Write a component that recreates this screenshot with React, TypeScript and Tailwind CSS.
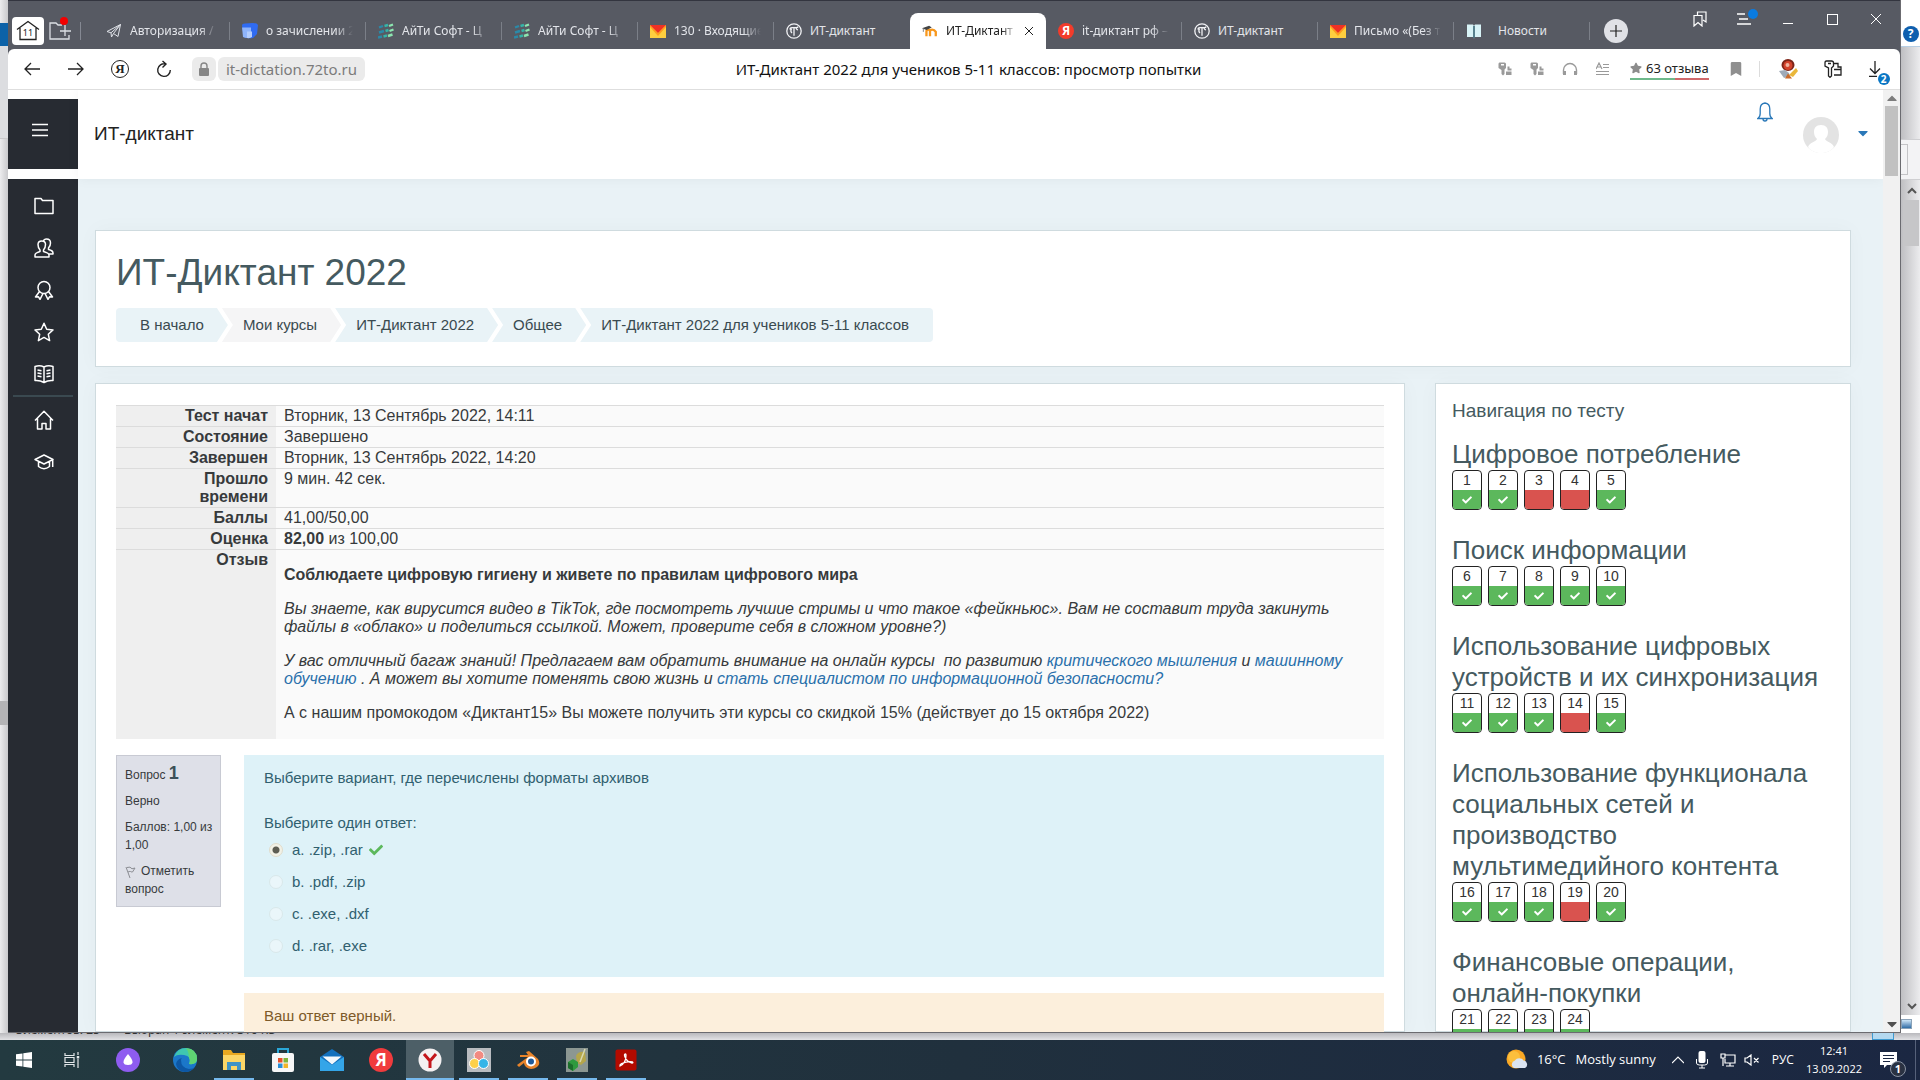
import type { ReactNode } from "react";
import clsx from "clsx";
import {
  FaBookmark,
  FaCaretDown,
  FaCaretUp,
  FaCheck,
  FaStar,
} from "react-icons/fa";

type IconProps = { className?: string };

/* ---------- Browser icons ---------- */

const PlaneIcon = () => (
  <svg viewBox="0 0 16 16" className="size-4" fill="none" stroke="#dfe2e8">
    <path d="M1 8.5 14.5 1.5 12 13.5 7.5 10.5 5.5 14 5 9.8Z M5 9.8 14.5 1.5 7.5 10.5" />
  </svg>
);

const BlobIcon = () => (
  <svg viewBox="0 0 16 16" className="size-4">
    <path d="M0 2.500Q0 .5 3 .5L11 0q4 0 5 2l-1 9-4 4q-5 1-9-1Z" fill="#2f6bf2" />
    <path d="M0 4.500h9v9.500q-4 2-8 0Z" fill="#8fb4fb" />
    <path d="M5 8.500h5v5.500q-2 1.500-5 1Z" fill="#b4cdfd" />
  </svg>
);

const SoftIcon = () => (
  <svg viewBox="0 0 16 16" className="size-4" strokeWidth="2.400">
    <path d="M1 4.500 5 3M1 9.500 6 8M0 14.500 4 13.500" stroke="#2b8aa8" />
    <path d="M6.500 3 10 2M7.500 8 10.500 7M5.500 13.500 9 12.500" stroke="#35b4a8" />
    <path d="M11 3 15 1.500M11.500 8 15.500 6.500M10 13 14.500 11.500" stroke="#8ce6b0" />
  </svg>
);

const MailIcon = () => (
  <svg viewBox="0 0 16 14" className="h-3.5 w-4">
    <path d="M0 1h16v13H0z" fill="#ffcf3f" />
    <path d="M0 1 8 9 16 1v2l-8 9-8-9z" fill="#ff9d1e" />
    <path d="M0 1h16L8 9z" fill="#ee3124" />
  </svg>
);

const CircleTIcon = () => (
  <svg viewBox="0 0 16 16" className="size-4" fill="none" stroke="#f1f2f5" strokeWidth="1.300">
    <circle cx="8" cy="8" r="7.200" />
    <path d="M3.800 6.500q.5-2 2.200-1.800h4.500q1.300 0 1.700-1.200M8 4.700v8M5.500 5.500q-1.500 3 .5 4.500M10 4.900q.8 2 2 2" />
  </svg>
);

const MoodleIcon = () => (
  <svg viewBox="0 0 18 14" className="h-3.5 w-4" fill="none">
    <path d="M5 13V7.500q0-2 2-2t2 2V13M9 13V7.500q0-2 2.500-2T15.500 8v5" stroke="#f8981d" strokeWidth="2.600" />
    <path d="M0 4 8 1l3 2-6 3z" fill="#444" />
    <path d="M1.500 4v4" stroke="#777" />
  </svg>
);

const YaIcon = () => (
  <span className="flex size-4 items-center justify-center rounded-full bg-[#f33b2a] text-xs font-bold text-white">
    Я
  </span>
);

const BookIcon = () => (
  <svg viewBox="0 0 16 16" className="size-4">
    <path d="M1 1.500h6L8 3l1-1.500h6V14H9l-1 1.500L7 14H1z" fill="#d8f3f7" />
    <path d="M8 3v12" stroke="#2c5b6b" strokeWidth="1.500" />
  </svg>
);

const KeyCardIcon = ({ className }: IconProps) => (
  <svg viewBox="0 0 14 14" className={className} fill="#9a9a9a">
    <path
      fillRule="evenodd"
      d="M1.500.5h5q1.500 0 1.500 1.500v4L6.500 7.500V12L5 13.500 3.500 12V8L.5 6V2q0-1.500 1-1.500zM3 2v1.500h3V2z"
    />
    <path d="M9.500 4.500h2v2h2v2h-4zM8 9.500h5.500V13H8z" />
  </svg>
);

/* ---------- Sidebar icons ---------- */

const Line = ({ children }: { children: ReactNode }) => (
  <svg
    viewBox="0 0 20 20"
    className="size-5"
    fill="none"
    stroke="currentColor"
    strokeWidth="1.500"
    strokeLinejoin="round"
  >
    {children}
  </svg>
);

const sideTop = [
  {
    label: "Файлы",
    icon: <path d="M1 2.500h6l1.500 2H19V17.500H1z" />,
  },
  {
    label: "Участники",
    icon: (
      <path d="M1 19v-2q0-2 5-3.500V12Q4 10 4 6.500 4 3 7.800 3q3.700 0 3.700 3.500 0 3.500-2 5.500v1.500Q15 15 15 17v2zM9.500 3q.5-2 3-2 4 0 4 4 0 3-2 5v1.500q4.500 1 4.500 3.500v1h-4" />
    ),
  },
  {
    label: "Значки",
    icon: (
      <>
        <circle cx="10" cy="7.500" r="6" />
        <path d="M5.500 11.500 1.500 17l3-.2L6 19.300l3-5.800M14.500 11.500l4 5.500-3-.2-1.500 2.500-3-5.800" />
      </>
    ),
  },
  {
    label: "Компетенции",
    icon: <path d="m10 1.200 2.700 6 6.300.7-4.700 4.300 1.300 6.400L10 15.400l-5.600 3.200 1.300-6.400L1 7.900l6.300-.7z" />,
  },
  {
    label: "Оценки",
    icon: (
      <path d="M1 2.500q5-1.500 9 .5 4-2 9-.5v14q-5-.5-9 2-4-2.500-9-2zM10 3v15.500M3.500 6l4 .8M3.500 9l4 .8M3.500 12l4 .8M12.500 6.800l4-.8M12.500 9.800l4-.8M12.500 12.800l4-.8" />
    ),
  },
];

const sideBottom = [
  {
    label: "Домой",
    icon: <path d="M1 10.500 10 1.200l9 9.300M3.500 8.500V19H8v-5.500h4V19h4.500V8.500" />,
  },
  {
    label: "Мои курсы",
    icon: (
      <path d="m1 7.500 9-4.500 9 4.500-9 4.500zM4.500 9.500v5q5.500 4.500 11 0v-5M18.700 8v7" />
    ),
  },
];

/* ---------- Data ---------- */

const tabs = [
  { title: "Авторизация /", icon: <PlaneIcon />, fade: true },
  { title: "о зачислении 2", icon: <BlobIcon />, fade: true },
  { title: "АйТи Софт - Ц", icon: <SoftIcon />, fade: true },
  { title: "АйТи Софт - Ц", icon: <SoftIcon />, fade: true },
  { title: "130 · Входящие", icon: <MailIcon />, fade: true },
  { title: "ИТ-диктант", icon: <CircleTIcon /> },
  { title: "ИТ-Диктант", icon: <MoodleIcon />, active: true, fade: true },
  { title: "it-диктант рф –", icon: <YaIcon />, fade: true },
  { title: "ИТ-диктант", icon: <CircleTIcon /> },
  { title: "Письмо «(Без т", icon: <MailIcon />, fade: true },
  { title: "Новости", icon: <BookIcon /> },
];

const crumbs = [
  "В начало",
  "Мои курсы",
  "ИТ-Диктант 2022",
  "Общее",
  "ИТ-Диктант 2022 для учеников 5-11 классов",
];

const summary: [string, ReactNode][] = [
  ["Тест начат", "Вторник, 13 Сентябрь 2022, 14:11"],
  ["Состояние", "Завершено"],
  ["Завершен", "Вторник, 13 Сентябрь 2022, 14:20"],
  ["Прошло времени", "9 мин. 42 сек."],
  ["Баллы", "41,00/50,00"],
  [
    "Оценка",
    <>
      <b>82,00</b> из 100,00
    </>,
  ],
];

const answers = ["a. .zip, .rar", "b. .pdf, .zip", "c. .exe, .dxf", "d. .rar, .exe"];

const sections = [
  { title: "Цифровое потребление", items: [1, 2, 3, 4, 5] },
  { title: "Поиск информации", items: [6, 7, 8, 9, 10] },
  { title: "Использование цифровых устройств и их синхронизация", items: [11, 12, 13, 14, 15] },
  {
    title: "Использование функционала социальных сетей и производство мультимедийного контента",
    items: [16, 17, 18, 19, 20],
  },
  { title: "Финансовые операции, онлайн-покупки", items: [21, 22, 23, 24] },
];

const wrong = [3, 4, 14, 19];

/* ---------- Browser chrome ---------- */

function TabBar() {
  return (
    <div className="flex h-[49px] shrink-0 border-t border-[#33353f] bg-[#575a63] text-xs text-[#e3e5ea]">
      <div className="flex w-[86px] items-center pt-3 pl-1">
        <button className="flex h-7 w-8 items-center justify-center rounded bg-white" aria-label="Группы вкладок">
          <svg viewBox="0 0 24 22" className="h-[22px] w-6" fill="none" stroke="#222" strokeWidth="1.300">
            <path d="M4 8v11.500h16V8M1 9.500 12 1.500l11 8" />
            <text x="12" y="15.500" fontSize="9" textAnchor="middle" fill="#222" stroke="none">
              11
            </text>
          </svg>
        </button>
        <button className="relative ml-1 flex h-7 w-6 items-center justify-center" aria-label="Новая группа">
          <svg viewBox="0 0 22 18" className="h-[18px] w-[22px]" fill="none" stroke="#dcdfe5" strokeWidth="1.300">
            <path d="M13 3H9L7 1H1v16h19v-4M16 3v11M11 9h11" />
          </svg>
          <span className="absolute top-0 right-1 size-2 rounded-full bg-[#f30000]" />
        </button>
        <span className="ml-2 h-[18px] w-px bg-[#858993]" />
      </div>
      <div className="flex pt-3">
        {tabs.map((tab, i) => (
          <div
            key={i}
            className={clsx(
              "flex w-[136px] items-center pl-3",
              tab.active && "rounded-t-lg bg-white text-[#222]",
            )}
          >
            <span className="w-4 shrink-0">{tab.icon}</span>
            <a
              href="#"
              className={clsx(
                "ml-2 min-w-0 flex-1 whitespace-nowrap",
                tab.fade && "[mask-image:linear-gradient(90deg,black_80%,transparent_100%)]",
                tab.title === "Новости" && "pl-2",
                !tab.active && "mr-3",
              )}
            >
              {tab.title}
            </a>
            {tab.active ? (
              <button className="mr-3 ml-2" aria-label="Закрыть вкладку">
                <svg viewBox="0 0 10 10" className="size-[10px]" stroke="#222">
                  <path d="M1 1 9 9M9 1 1 9" />
                </svg>
              </button>
            ) : (
              tabs[i + 1]?.active || <span className="h-[18px] w-px bg-[#7b7f88]" />
            )}
          </div>
        ))}
        <button
          className="mt-1.5 ml-3.5 flex size-6 items-center justify-center rounded-full bg-[#e0e1e6]"
          aria-label="Новая вкладка"
        >
          <svg viewBox="0 0 12 12" className="size-3" stroke="#222" strokeWidth="1.200">
            <path d="M6 0v12M0 6h12" />
          </svg>
        </button>
      </div>
      <div className="ml-auto flex h-9 items-center text-white">
        <button className="flex w-11 justify-center" aria-label="Закладки">
          <svg viewBox="0 0 14 16" className="h-4 w-3.5" fill="none" stroke="currentColor" strokeWidth="1.200">
            <path d="M1 4.500h8v10.500L5 11.500 1 15zM4.500 4V1H13v10l-3-2" />
          </svg>
        </button>
        <button className="relative flex w-11 justify-center" aria-label="Меню">
          <svg viewBox="0 0 14 12" className="h-3 w-3.5" stroke="currentColor" strokeWidth="1.300">
            <path d="M0 1h8M2 6h9M0 11h14" />
          </svg>
          <span className="absolute -top-1 right-2 size-[10px] rounded-full bg-[#0a7be0]" />
        </button>
        <button className="flex w-11 justify-center pt-2" aria-label="Свернуть">
          <span className="h-px w-[10px] bg-white" />
        </button>
        <button className="flex w-11 justify-center" aria-label="Развернуть">
          <span className="size-[11px] border border-white" />
        </button>
        <button className="mr-0.5 flex w-11 justify-center" aria-label="Закрыть">
          <svg viewBox="0 0 12 12" className="size-3" stroke="currentColor">
            <path d="M1 1 11 11M11 1 1 11" />
          </svg>
        </button>
      </div>
    </div>
  );
}

function AddressBar() {
  return (
    <div className="bg-[#575a63]">
      <div className="flex h-[41px] items-center rounded-t-md border-b border-[#dedede] bg-white">
        <div className="flex w-[439px] items-center">
          <button className="flex w-12 justify-center" aria-label="Назад">
            <svg viewBox="0 0 16 14" className="h-3.5 w-4" fill="none" stroke="#222" strokeWidth="1.300">
              <path d="M16 7H1M7 1 1 7l6 6" />
            </svg>
          </button>
          <button className="flex w-10 justify-center" aria-label="Вперёд">
            <svg viewBox="0 0 16 14" className="h-3.5 w-4" fill="none" stroke="#222" strokeWidth="1.300">
              <path d="M0 7h15M9 1l6 6-6 6" />
            </svg>
          </button>
          <button className="flex w-12 justify-center" aria-label="Яндекс">
            <span className="flex size-[18px] items-center justify-center rounded-full border border-[#222] font-['Liberation_Serif',serif] text-[13px] font-bold text-[#222]">
              Я
            </span>
          </button>
          <button className="flex w-10 justify-center" aria-label="Обновить">
            <svg viewBox="0 0 16 18" className="h-[18px] w-4" fill="none" stroke="#222" strokeWidth="1.400">
              <path d="M9.500 4A6.300 6.300 0 1 0 14.300 10M6.500 1l3.500 3-3.500 3.500" />
            </svg>
          </button>
          <span className="ml-2 flex h-6 w-6 items-center justify-center rounded-md bg-[#ebebeb]">
            <svg viewBox="0 0 10 14" className="h-3.5 w-[10px]">
              <path d="M2 7V4a3 3 0 0 1 6 0v3" fill="none" stroke="#868686" strokeWidth="1.400" />
              <rect y="6" width="10" height="8" rx="1" fill="#868686" />
            </svg>
          </span>
          <a href="#" className="ml-0.5 flex h-6 items-center rounded-md bg-[#ebebeb] px-2 text-[15px] text-[#7b7b7b]">
            it-dictation.72to.ru
          </a>
        </div>
        <div className="flex-1 text-center text-[15px] whitespace-nowrap text-[#111]">
          ИТ-Диктант 2022 для учеников 5-11 классов: просмотр попытки
        </div>
        <div className="flex w-[410px] items-center">
          <KeyCardIcon className="ml-2 size-3.5" />
          <KeyCardIcon className="ml-[18px] size-3.5" />
          <svg viewBox="0 0 16 14" className="ml-[18px] h-3.5 w-4" fill="none" stroke="#9a9a9a" strokeWidth="1.400">
            <path d="M1.500 12V8a6.500 6.500 0 0 1 13 0v4" />
            <path d="M2.500 9v4M13.500 9v4" strokeWidth="3" />
          </svg>
          <svg viewBox="0 0 14 14" className="ml-[18px] size-3.5" fill="none" stroke="#9a9a9a" strokeWidth="1.200">
            <path d="M0 9.500h13M0 12.500h13M7 2.500h6M7 5.500h6M0 7 3 1l3 6M1 5h4" />
          </svg>
          <div className="ml-[20px] flex flex-col">
            <a href="#" className="flex items-center gap-1 text-[13px] leading-5 whitespace-nowrap text-[#222]">
              <FaStar className="size-3 text-[#8c8c8c]" />
              63 отзыва
            </a>
            <span className="flex h-0.5">
              <span className="flex-1 bg-[#6fb98b]" />
              <span className="w-[34px] bg-[#d0686a]" />
            </span>
          </div>
          <FaBookmark className="ml-[20px] size-3.5 text-[#8f8f8f]" />
          <span className="ml-4 h-4 w-px bg-[#dcdcdc]" />
          <svg viewBox="0 0 20 20" className="ml-[18px] size-5">
            <ellipse cx="10" cy="6" rx="6.500" ry="6" fill="#7d2418" />
            <circle cx="10" cy="6.500" r="4.500" fill="#d4432c" />
            <circle cx="9.500" cy="6" r="2" fill="#efb4a0" />
            <path d="m1 12 6-1 4 3 1 3-6 2z" fill="#9eaab8" />
            <path d="m11 16 7-7 2 3-5 6z" fill="#eab73a" />
            <path d="m7 19.500 3-5 4 5z" fill="#c96a2b" />
          </svg>
          <svg viewBox="0 0 18 18" className="ml-[26px] size-[18px]" fill="none" stroke="#222" strokeWidth="1.300">
            <path d="M2.500 1h5q2 0 2 2v3L7.500 8V16L6 17.300 4.500 16V8L1 6V3q0-2 1.500-2zM4 3.500h3M10 3.500h4V7h3v8h-7M10 9.500h7" />
          </svg>
          <button className="relative ml-[26px]" aria-label="Загрузки">
            <svg viewBox="0 0 14 16" className="h-4 w-3.5" fill="none" stroke="#222" strokeWidth="1.300">
              <path d="M7 0v12M2 7.500 7 12.500l5-5M1 15.500h8" />
            </svg>
            <span className="absolute -right-2 -bottom-2 flex size-3 items-center justify-center rounded-full bg-[#0a76c4] text-[10px] leading-3 font-bold text-white">
              2
            </span>
          </button>
        </div>
      </div>
    </div>
  );
}

/* ---------- Page ---------- */

function Breadcrumbs() {
  return (
    <nav className="mt-[15px] flex text-[15px] leading-[34px] whitespace-nowrap text-[#3a4a50]">
      {crumbs.map((crumb, i) => (
        <a
          key={crumb}
          href="#"
          className={clsx(
            "h-[34px]",
            i === 1 ? "bg-[#f5f5f6]" : "bg-[#e9f3f7]",
            i === 0 &&
              "rounded-l pr-6 pl-6 [clip-path:polygon(0_0,calc(100%-11px)_0,100%_50%,calc(100%-11px)_100%,0_100%)]",
            i > 0 &&
              i < 4 &&
              "-ml-1.5 pr-6 pl-[21px] [clip-path:polygon(0_0,calc(100%-11px)_0,100%_50%,calc(100%-11px)_100%,0_100%,11px_50%)]",
            i === 4 &&
              "-ml-1.5 rounded-r pr-6 pl-[21px] [clip-path:polygon(0_0,100%_0,100%_100%,0_100%,11px_50%)]",
          )}
        >
          {crumb}
        </a>
      ))}
    </nav>
  );
}

function SummaryTable() {
  return (
    <table className="w-full text-base leading-[18px] text-[#373a3c]">
      <tbody>
        {summary.map(([label, value]) => (
          <tr key={label} className="border-t border-[#dcdcdc] align-top">
            <th className="w-40 bg-[#efefef] py-px pr-2 pl-8 text-right font-bold">{label}</th>
            <td className="bg-[#fafafa] px-2 py-px">{value}</td>
          </tr>
        ))}
        <tr className="border-t border-[#dcdcdc] align-top">
          <th className="bg-[#efefef] px-2 py-px text-right font-bold">Отзыв</th>
          <td className="space-y-4 bg-[#fafafa] px-2 pt-4 pb-[17px]">
            <p className="font-bold">Соблюдаете цифровую гигиену и живете по правилам цифрового мира</p>
            <p className="italic">
              Вы знаете, как вирусится видео в TikTok, где посмотреть лучшие стримы и что такое
              «фейкньюс». Вам не составит труда закинуть файлы в «облако» и поделиться ссылкой. Может,
              проверите себя в сложном уровне?)
            </p>
            <p className="italic">
              У вас отличный багаж знаний! Предлагаем вам обратить внимание на онлайн курсы&nbsp; по
              развитию{" "}
              <a href="#" className="text-[#2a70ab]">
                критического мышления
              </a>{" "}
              и{" "}
              <a href="#" className="text-[#2a70ab]">
                машинному обучению
              </a>{" "}
              . А может вы хотите поменять свою жизнь и{" "}
              <a href="#" className="text-[#2a70ab]">
                стать специалистом по информационной безопасности?
              </a>
            </p>
            <p>
              А с нашим промокодом «Диктант15» Вы можете получить эти курсы со скидкой 15% (действует до
              15 октября 2022)
            </p>
          </td>
        </tr>
      </tbody>
    </table>
  );
}

function Question() {
  return (
    <div className="mt-4 flex items-start gap-[23px]">
      <div className="w-[105px] shrink-0 border border-[#c8cad3] bg-[#dee0e8] py-2 pr-1 pl-2 text-xs leading-[18px] text-[#373a3c]">
        <h3>
          Вопрос <span className="text-lg leading-[18px] font-bold text-[#3c5058]">1</span>
        </h3>
        <div className="mt-2">Верно</div>
        <div className="mt-2">Баллов: 1,00 из 1,00</div>
        <a href="#" className="mt-2 block">
          <svg viewBox="0 0 12 12" className="mr-1 inline size-3" fill="none" stroke="#8b8d93">
            <path d="M1 1 5 12M2 1.500q4-1 4 .5t4 0L7.500 6q-2 0-2-.5T3 6" />
          </svg>
          Отметить вопрос
        </a>
      </div>
      <div className="min-w-0 flex-1 text-[15px] leading-[18px]">
        <div className="bg-[#def2f8] px-5 pt-3.5 pb-[15px] text-[#30606f]">
          <p>Выберите вариант, где перечислены форматы архивов</p>
          <fieldset>
            <legend className="pt-[27px] pb-0.5">Выберите один ответ:</legend>
            {answers.map((answer, i) => (
              <label key={answer} className="flex h-8 items-center pl-[5px]">
                <input
                  type="radio"
                  name="q1"
                  defaultChecked={i === 0}
                  className="mr-[9px] size-3.5 appearance-none rounded-full border border-[#d9e8ea] bg-[#eaf6fa] checked:border-[#e0dccb] checked:bg-[radial-gradient(circle,#5d5d52_3px,#f2f1e6_4px)]"
                />
                {answer}
                {i === 0 && <FaCheck className="ml-1.5 size-3.5 text-[#5cb85c]" />}
              </label>
            ))}
          </fieldset>
        </div>
        <div className="mt-4 bg-[#fcefdc] px-5 py-3.5 text-[#7d5a29]">Ваш ответ верный.</div>
      </div>
    </div>
  );
}

function QuizNav() {
  return (
    <aside className="w-[416px] shrink-0 border border-[#cfdbdf] bg-white px-4 pt-4 text-[#455a60] shadow-[0_0_20px_rgba(0,0,0,0.03)]">
      <h2 className="text-[19px] leading-[22px]">Навигация по тесту</h2>
      <div className="mt-[17px] space-y-[25px]">
        {sections.map((section) => (
          <section key={section.title}>
            <h3 className="text-[26px] leading-[31px]">{section.title}</h3>
            <div className="flex gap-1.5">
              {section.items.map((n) => (
                <a
                  key={n}
                  href="#"
                  className="flex h-10 w-[30px] flex-col overflow-hidden rounded border border-[#222] bg-white text-center text-sm leading-[19px] text-[#333]"
                >
                  {n}
                  <span
                    className={clsx(
                      "flex flex-1 items-center justify-center",
                      wrong.includes(n) ? "bg-[#d9534f]" : "bg-[#5cb85c]",
                    )}
                  >
                    {!wrong.includes(n) && <FaCheck className="size-[10px] text-white" />}
                  </span>
                </a>
              ))}
            </div>
          </section>
        ))}
      </div>
    </aside>
  );
}

function SideBar() {
  return (
    <div className="flex w-[70px] shrink-0 flex-col bg-white pt-[9px] text-white">
      <button className="flex h-[70px] shrink-0 items-center bg-[#272b32] pl-6" aria-label="Боковая панель">
        <svg viewBox="0 0 16 14" className="mb-2 h-3.5 w-4" stroke="currentColor" strokeWidth="1.500">
          <path d="M0 1.500h16M0 7h16M0 12.500h16" />
        </svg>
      </button>
      <nav className="mt-[10px] flex flex-1 flex-col items-center bg-[#272b32]">
        <div className="flex flex-col items-center pt-1.5">
          {sideTop.map(({ label, icon }) => (
            <a key={label} href="#" aria-label={label} className="flex h-[42px] items-center pl-0.5">
              <Line>{icon}</Line>
            </a>
          ))}
        </div>
        <span className="h-0.5 w-[60px] bg-[#3a4950]" />
        <div className="flex flex-col items-center pt-0.5">
          {sideBottom.map(({ label, icon }) => (
            <a key={label} href="#" aria-label={label} className="flex h-[42px] items-center pl-0.5">
              <Line>{icon}</Line>
            </a>
          ))}
        </div>
      </nav>
    </div>
  );
}

function Page() {
  return (
    <div className="flex min-h-0 flex-1 overflow-hidden font-['Liberation_Sans',Arial,sans-serif]">
      <SideBar />
      <div className="flex min-w-0 flex-1 flex-col bg-[#e9f2f6]">
        <header className="flex h-[89px] shrink-0 bg-white pr-3 pl-4 shadow-[0_0_12px_rgba(0,0,0,0.05)]">
          <a href="#" className="pt-8 text-[19px] leading-6 text-[#222]">
            ИТ-диктант
          </a>
          <button className="ml-auto self-start pt-3" aria-label="Уведомления">
            <svg viewBox="0 0 16 20" className="h-5 w-4" fill="none" stroke="#2a78b8" strokeWidth="1.300">
              <path d="M.8 16.500q2.400-1.500 2.400-5V7q0-5.500 4.800-6 4.800.5 4.800 6v4.500q0 3.500 2.400 5zM6 17q0 2 2 2t2-2" />
            </svg>
          </button>
          <svg viewBox="0 0 36 36" className="mt-[27px] ml-[30px] size-9">
            <circle cx="18" cy="18" r="18" fill="#e3e3e3" />
            <path d="M18 8c-5 0-7 3-7 7 0 3 1 5 3 7-1 3-7 3-9 8 3 4 8 6 13 6s10-2 13-6c-2-5-8-5-9-8 2-2 3-4 3-7 0-4-2-7-7-7z" fill="#fff" />
          </svg>
          <button className="ml-4 self-start pt-[35px]" aria-label="Меню пользователя">
            <FaCaretDown className="size-4 text-[#2a78b8]" />
          </button>
        </header>
        <main className="flex min-h-0 flex-1 flex-col pt-[51px] pr-8 pl-[17px]">
          <div className="shrink-0 border border-[#cfdbdf] bg-white px-5 pt-[22px] pb-6 shadow-[0_0_20px_rgba(0,0,0,0.03)]">
            <h1 className="text-[37px] leading-10 text-[#455a60]">ИТ-Диктант 2022</h1>
            <Breadcrumbs />
          </div>
          <div className="mt-4 flex min-h-0 flex-1 gap-[30px]">
            <section className="min-w-0 flex-1 border border-[#cfdbdf] bg-white px-5 pt-[21px] shadow-[0_0_20px_rgba(0,0,0,0.03)]">
              <SummaryTable />
              <Question />
            </section>
            <QuizNav />
          </div>
        </main>
      </div>
      <div className="flex w-[17px] shrink-0 flex-col items-center bg-[#f1f1f1] text-[#7d7d7d]">
        <FaCaretUp className="h-4 w-3" />
        <span className="h-[70px] w-[13px] bg-[#c1c1c1]" />
        <FaCaretDown className="mt-auto h-4 w-3 text-[#505050]" />
      </div>
    </div>
  );
}

/* ---------- Desktop ---------- */

const taskbar = [
  {
    label: "Алиса",
    icon: (
      <>
        <circle cx="12" cy="12" r="12" fill="#8e5cf0" />
        <path d="M12 6q5 6 4.500 8.500-.5 2.500-4.500 2.500t-4.500-2.500Q7 12 12 6z" fill="#fff" />
      </>
    ),
  },
  {
    label: "Edge",
    icon: (
      <>
        <circle cx="12" cy="12" r="12" fill="#1b77c9" />
        <path d="M1 9Q4 0 13 0q11 1 11 11 0 6-8 5 3-8-5-9Q4 6 1 9z" fill="#3fc6b0" />
        <path d="M13 0q11 1 11 11 0 6-8 5 2-3 0-6 0-6-3-10z" fill="#5fd473" />
        <path d="M8 12q0 8 8 9 4 0 6-2-4 5-10 5Q4 23 3 16q1-5 6-6-1 1-1 2z" fill="#0d57a4" />
      </>
    ),
  },
  {
    label: "Проводник",
    open: true,
    icon: (
      <>
        <path d="M1 2h8l2 3h12v17H1z" fill="#e9a820" />
        <path d="M1 7h22v15H1z" fill="#fcd666" />
        <path d="M5 22v-8h14v8h-4v-4H9v4z" fill="#3f93c6" />
      </>
    ),
  },
  {
    label: "Microsoft Store",
    icon: (
      <>
        <path d="M7 6V1h10v5" fill="none" stroke="#2aa7d8" strokeWidth="2" />
        <rect x="1" y="5" width="22" height="19" rx="2" fill="#f7f7f7" />
        <path d="M7 10h4.500v4.500H7z" fill="#e8502a" />
        <path d="M12.500 10H17v4.500h-4.500z" fill="#7eb53c" />
        <path d="M7 15.500h4.500V20H7z" fill="#2a8fd8" />
        <path d="M12.500 15.500H17V20h-4.500z" fill="#f2b428" />
      </>
    ),
  },
  {
    label: "Почта",
    icon: (
      <>
        <path d="M0 9 12 1l12 8v14H0z" fill="#1270bd" />
        <path d="m0 9 12 8 12-8v14H0z" fill="#34a5e8" />
        <path d="M2.500 8.500h19L12 16.500z" fill="#f3f8fc" />
      </>
    ),
  },
  {
    label: "Яндекс",
    icon: (
      <>
        <circle cx="12" cy="12" r="12" fill="#f03b3d" />
        <text x="12" y="18" fontSize="17" fontWeight="bold" textAnchor="middle" fill="#fff">
          Я
        </text>
      </>
    ),
  },
  {
    label: "Яндекс.Браузер",
    open: true,
    active: true,
    icon: (
      <>
        <circle cx="12" cy="12" r="11.500" fill="#f4f1f2" />
        <path d="m6 6 6 7 6-7M12 12v8" fill="none" stroke="#c4161c" strokeWidth="3" />
      </>
    ),
  },
  {
    label: "Paint",
    open: true,
    icon: (
      <>
        <path d="M0 0h24v24H0z" fill="#b9bcc0" />
        <circle cx="12" cy="7.500" r="5" fill="#f28b82" stroke="#fff" />
        <circle cx="7.500" cy="15.500" r="5" fill="#fdd04a" stroke="#fff" />
        <circle cx="16.500" cy="15.500" r="5" fill="#35b5e8" stroke="#fff" />
      </>
    ),
  },
  {
    label: "Blender",
    open: true,
    icon: (
      <>
        <path d="m1 17 11-8H4V7h8l-2-3 3-1 9 8q3 5-1 8-6 4-11 0-2-2-2-4l-5 4z" fill="#e8842a" />
        <circle cx="15" cy="13.500" r="5" fill="#fff" />
        <circle cx="15" cy="13.500" r="3" fill="#1f5a99" />
      </>
    ),
  },
  {
    label: "3D",
    open: true,
    icon: (
      <>
        <path d="M1 0h22v24H1z" fill="#8c9792" />
        <path d="M11 8q2-5 9-4l1 9-5 4-4-2z" fill="#b5a64a" />
        <path d="m3 14 5-3 5 3v5l-5 4-5-3z" fill="#2f9a3e" />
        <path d="m3 14 5 3v6l-5-3z" fill="#1c6d2b" />
        <path d="m20 1-5 13" stroke="#d9d9b0" strokeWidth="1.500" />
      </>
    ),
  },
  {
    label: "Acrobat",
    open: true,
    icon: (
      <>
        <rect x="1.500" y="1.500" width="21" height="21" rx="2" fill="#b30b00" />
        <path
          d="M6 18q6-3 6-10.500 0-2-1-1.500t0 3q2 5 7 6 1.500 0 .5-1-4-1-11 1.500-2 1-1.500 2.500z"
          fill="none"
          stroke="#fff"
          strokeWidth="1.300"
        />
      </>
    ),
  },
];

function Taskbar() {
  return (
    <footer className="flex h-10 shrink-0 bg-linear-to-r from-[#233a40] via-[#20303d] to-[#1b2742] text-white">
      <button className="flex w-12 items-center justify-center" aria-label="Пуск">
        <svg viewBox="0 0 16 16" className="size-4" fill="#fff">
          <path d="M0 2.300 6.500 1.400v6.200H0zM7.300 1.300 16 0v7.600H7.300zM0 8.400h6.500v6.200L0 13.700zM7.300 8.400H16V16l-8.700-1.200z" />
        </svg>
      </button>
      <button className="mr-2 flex w-12 items-center justify-center" aria-label="Представление задач">
        <svg viewBox="0 0 16 16" className="size-4" fill="none" stroke="#e4e8ea" strokeWidth="1.200">
          <path d="M1 1v2.500h9V1M1 15v-2.500h9V15M1 5.500h9v5H1zM14 0v3M14 7v9" />
          <path d="M14 4v2.500" strokeWidth="2.500" />
        </svg>
      </button>
      {taskbar.map((app) => (
        <button
          key={app.label}
          aria-label={app.label}
          className={clsx(
            "flex h-10 w-12 flex-col items-center",
            app.label === "Алиса" ? "mr-[9px]" : "mr-px",
            app.active && "bg-[#4d5f67]",
          )}
        >
          <svg viewBox="0 0 24 24" className="mt-2 size-6 shrink-0">
            {app.icon}
          </svg>
          {app.open && (
            <span className={clsx("mt-auto h-0.5 bg-[#76b9ed]", app.active ? "w-12" : "w-10")} />
          )}
        </button>
      ))}
      <div className="mr-1 ml-auto flex items-center font-['Open_Sans','Noto_Sans',sans-serif]">
        <svg viewBox="0 0 24 24" className="size-6">
          <circle cx="11" cy="11" r="9.500" fill="#f9a825" />
          <circle cx="9" cy="9" r="6" fill="#fcbf3d" />
          <path d="M9 20a4 4 0 0 1 1-7.500 5 5 0 0 1 8.500 0A4 4 0 0 1 20 20z" fill="#dbe4f1" />
        </svg>
        <span className="ml-2 text-[13px] whitespace-nowrap">16°C</span>
        <span className="ml-2.5 text-[13px] whitespace-nowrap">Mostly sunny</span>
        <svg viewBox="0 0 12 8" className="ml-4 h-2 w-3" fill="none" stroke="#fff" strokeWidth="1.200">
          <path d="m0 7 6-6 6 6" />
        </svg>
        <svg viewBox="0 0 12 18" className="ml-3 h-[18px] w-3" fill="#fff">
          <rect x="2.500" width="7" height="12" rx="2" />
          <path d="M.5 8v4q0 2 3 2h5q3 0 3-2V8M6 14v3M3 17h6" fill="none" stroke="#fff" />
        </svg>
        <svg viewBox="0 0 16 14" className="ml-3 h-3.5 w-4" fill="none" stroke="#fff" strokeWidth="1.200">
          <path d="M5 2h10v8H5V6M10 10v3M6 13h8M1 1h4v4H1zM3 5v8" />
        </svg>
        <svg viewBox="0 0 16 12" className="ml-2 h-3 w-4" fill="none" stroke="#fff" strokeWidth="1.200">
          <path d="M1 4h2l4-3v10L3 8H1zM10 4l4.500 4.500M14.500 4 10 8.500" />
        </svg>
        <span className="ml-3 text-xs">РУС</span>
        <div className="ml-3 text-center text-[11px] leading-[18px]">
          <div>12:41</div>
          <div>13.09.2022</div>
        </div>
        <button className="relative ml-[18px]" aria-label="Уведомления">
          <svg viewBox="0 0 18 18" className="size-[18px]">
            <path d="M0 1h17v13H7l-3 3v-3H0z" fill="#fff" />
            <path d="M3 4.500h11M3 7.500h11M3 10.500h7" stroke="#1b2742" />
          </svg>
          <span className="absolute -right-2 -bottom-2 flex size-4 items-center justify-center rounded-full border border-[#8a93a3] bg-[#2a3242] text-[11px] font-bold">
            1
          </span>
        </button>
        <span className="ml-[17px] h-10 w-px bg-[#56617a]" />
      </div>
    </footer>
  );
}

function RightEdge() {
  return (
    <div className="flex w-[19px] shrink-0 flex-col bg-linear-to-r from-[#bfbfc2] to-[#ececee]">
      <div className="flex h-[47px] items-end justify-center border-b border-[#b8cfe4] bg-white pb-1">
        <span className="flex size-4 items-center justify-center rounded-full bg-[#0f5fae] text-xs font-bold text-white">
          ?
        </span>
      </div>
      <div className="mt-[92px] h-[41px] border-y border-[#cfcfd2] bg-[#f3f3f5] py-1">
        <div className="mr-3 h-full border border-l-0 border-[#c4c4c7]" />
      </div>
      <svg viewBox="0 0 10 10" className="mt-1.5 ml-1.5 size-[10px]" fill="none" stroke="#555" strokeWidth="2">
        <path d="m1 7 4-4 4 4" />
      </svg>
      <span className="mt-1 ml-0.5 h-[46px] w-4 bg-[#c6c6c8]" />
      <svg viewBox="0 0 10 10" className="mt-auto mb-1 ml-1.5 size-[10px]" fill="none" stroke="#555" strokeWidth="2">
        <path d="m1 3 4 4 4-4" />
      </svg>
      <div className="flex h-[18px] items-center bg-white">
        <span className="h-2.5 w-[11px] border border-[#8aa2b8] bg-linear-to-b from-[#cfe6f7] to-[#2f6da5]" />
      </div>
    </div>
  );
}

export default function App() {
  return (
    <div className="flex h-screen w-full flex-col overflow-hidden bg-[#e4e4e7] font-['Noto_Sans','Open_Sans',sans-serif]">
      <div className="flex min-h-0 flex-1">
        <div className="flex w-2 shrink-0 flex-col bg-linear-to-r from-[#ececee] to-[#c9c9cc]">
          <span className="mt-[23px] h-[23px] bg-[#0c62a8]" />
          <span className="h-[93px] border-b border-[#c8c8ca] bg-[#dcdde0]" />
          <span className="mt-[562px] h-6 bg-[#b4b4b6]" />
        </div>
        <div className="flex min-w-0 flex-1 flex-col border-r border-b border-[#6b6b70]">
          <TabBar />
          <AddressBar />
          <Page />
        </div>
        <RightEdge />
      </div>
      {/* status bar of the Explorer window behind the browser */}
      <div className="flex h-[7px] shrink-0 items-end gap-6 overflow-hidden bg-linear-to-b from-[#b9b9bd] to-[#e2e2e5] pr-[26px] pl-4 text-xs text-[#333]">
        <span className="pb-0.5">Элементов: 25</span>
        <span className="pb-0.5">Выбран 1 элемент: 316 КБ</span>
        <span className="ml-auto h-[7px] w-[22px] border border-t-0 border-[#3f9ad0] bg-[#b4d9f0]" />
      </div>
      <Taskbar />
    </div>
  );
}
